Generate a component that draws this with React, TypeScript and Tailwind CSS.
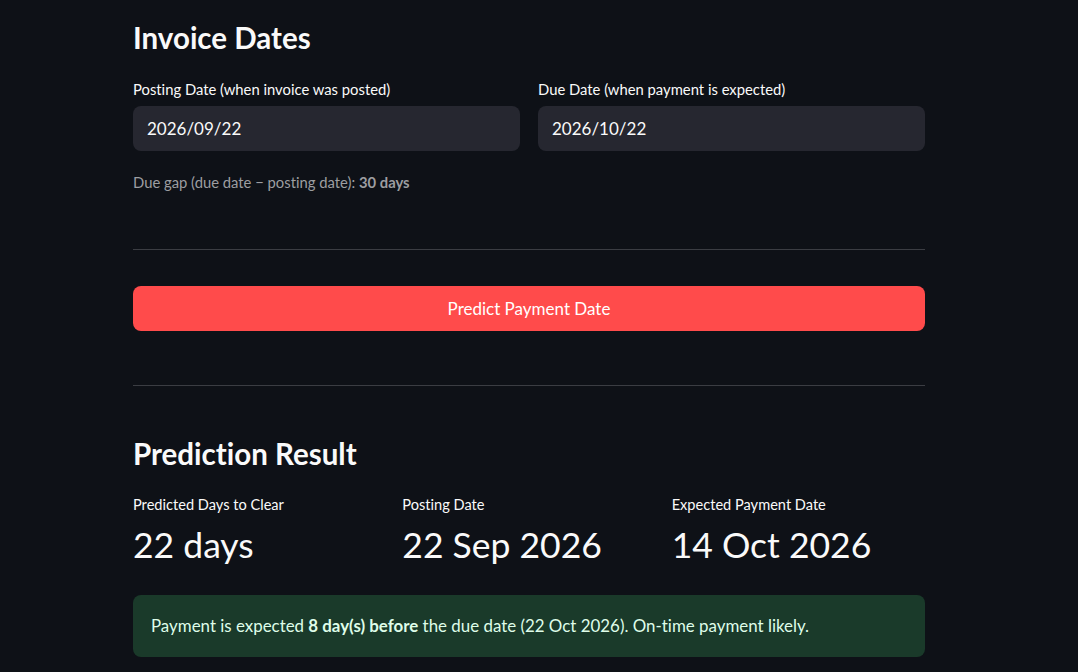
import React from 'react';

const font = { fontFamily: '"Lato", "Liberation Sans", sans-serif' };

const DateField = ({ label, value }: { label: string; value: string }) => (
  <div className="flex-1 flex flex-col">
    <label className="text-[14.8px] leading-[20px] text-[#fafafa] mb-[7px]">{label}</label>
    <div className="h-[45px] rounded-lg bg-[#262730] px-[14px] flex items-center text-[17px] text-[#fafafa]">
      {value}
    </div>
  </div>
);

const Metric = ({ label, value }: { label: string; value: string }) => (
  <div className="flex-1 flex flex-col">
    <div className="text-[14.6px] leading-[20px] text-[#fafafa]">{label}</div>
    <div className="mt-[8px] text-[35.5px] leading-[44px] text-[#fafafa]">{value}</div>
  </div>
);

export default function App() {
  return (
    <div
      className="min-h-screen w-full bg-[#0e1117] overflow-hidden [font-variant-ligatures:none]"
      style={font}
    >
      <div className="ml-[133px] w-[792px] pt-[21px] flex flex-col">
        <h3 className="text-[29.5px] leading-[34px] font-bold text-[#fafafa]">Invoice Dates</h3>

        <div className="mt-[24px] flex gap-[18px]">
          <DateField label="Posting Date (when invoice was posted)" value="2026/09/22" />
          <DateField label="Due Date (when payment is expected)" value="2026/10/22" />
        </div>

        <p className="mt-[21px] text-[14.8px] leading-[20px] text-[#9d9ea1]">
          Due gap (due date − posting date): <span className="font-bold">30 days</span>
        </p>

        <hr className="mt-[57px] border-0 border-t border-[#3b3d43]" />

        <button className="mt-[36px] h-[45px] w-full rounded-lg bg-[#ff4b4b] text-[17px] text-white">
          Predict Payment Date
        </button>

        <hr className="mt-[54px] border-0 border-t border-[#3b3d43]" />

        <h3 className="mt-[51px] text-[29.5px] leading-[34px] font-bold text-[#fafafa]">Prediction Result</h3>

        <div className="mt-[24px] flex gap-[16px]">
          <Metric label="Predicted Days to Clear" value="22 days" />
          <Metric label="Posting Date" value="22 Sep 2026" />
          <Metric label="Expected Payment Date" value="14 Oct 2026" />
        </div>

        <div className="mt-[28px] h-[62px] rounded-lg bg-[#1a3a2a] px-[18px] flex items-center text-[16.9px] text-[#dffde9]">
          <span>
            Payment is expected <span className="font-bold">8 day(s) before</span> the due date (22 Oct 2026). On-time
            payment likely.
          </span>
        </div>
      </div>
    </div>
  );
}
